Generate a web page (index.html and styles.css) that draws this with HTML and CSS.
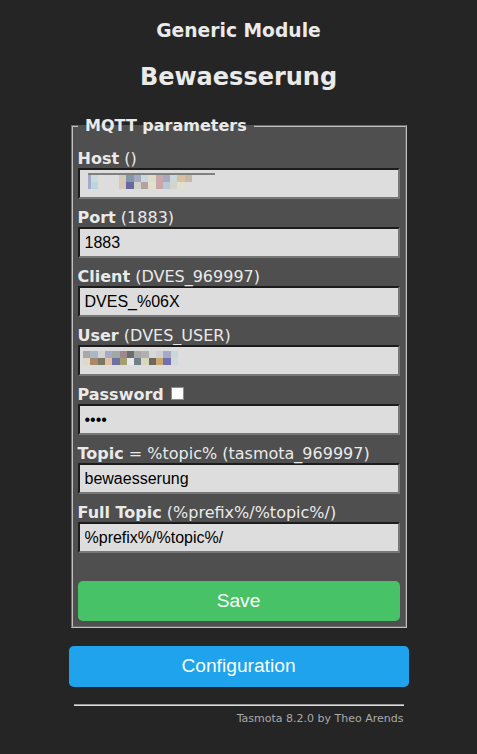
FILE: index.html
```html
<!DOCTYPE html>
<html lang="de">
<head>
    <meta charset="UTF-8">
    <meta name="viewport" content="width=device-width, initial-scale=1.0">
    <title>Bewaesserung - MQTT</title>
    <link rel="stylesheet" href="styles.css">
</head>
<body>
    <div class="page">
        <div class="head">
            <h3>Generic Module</h3>
            <h2>Bewaesserung</h2>
        </div>

        <fieldset class="box">
            <legend><b>&nbsp;MQTT parameters&nbsp;</b></legend>
            <form id="mqtt-form" method="get" action="mq">
                <p class="field">
                    <label for="mh"><b>Host</b> ()</label>
                    <span class="inbox">
                        <input type="text" id="mh" name="mh" value="">
                        <span class="mask mask-host">
                            <span class="bar"></span>
                            <span class="row r1"></span>
                            <span class="row r2"></span>
                        </span>
                    </span>
                </p>
                <p class="field">
                    <label for="ml"><b>Port</b> (1883)</label>
                    <input type="text" id="ml" name="ml" value="1883">
                </p>
                <p class="field">
                    <label for="mc"><b>Client</b> (DVES_969997)</label>
                    <input type="text" id="mc" name="mc" value="DVES_%06X">
                </p>
                <p class="field">
                    <label for="mu"><b>User</b> (DVES_USER)</label>
                    <span class="inbox">
                        <input type="text" id="mu" name="mu" value="">
                        <span class="mask mask-user">
                            <span class="row r1"></span>
                            <span class="row r2"></span>
                        </span>
                    </span>
                </p>
                <p class="field">
                    <label for="mp"><b>Password</b> <input type="checkbox" class="show" id="sp"></label>
                    <input type="password" id="mp" name="mp" value="****">
                </p>
                <p class="field">
                    <label for="mt"><b>Topic</b> = %topic% (tasmota_969997)</label>
                    <input type="text" id="mt" name="mt" value="bewaesserung">
                </p>
                <p class="field">
                    <label for="mf"><b>Full Topic</b> (%prefix%/%topic%/)</label>
                    <input type="text" id="mf" name="mf" value="%prefix%/%topic%/">
                </p>
                <button type="submit" class="btn save">Save</button>
            </form>
        </fieldset>

        <form class="cfg" action="cn" method="get">
            <button type="submit" class="btn">Configuration</button>
        </form>

        <div class="foot">
            <hr>
            <span>Tasmota 8.2.0 by Theo Arends</span>
        </div>
    </div>

    <script>
        document.getElementById('sp').addEventListener('click', function() {
            var p = document.getElementById('mp');
            p.type = p.type === 'password' ? 'text' : 'password';
        });
    </script>
</body>
</html>
```

FILE: styles.css
```css
body {
    margin: 8px;
    background: #252525;
    color: #eaeaea;
    font-family: "DejaVu Sans", Verdana, sans-serif;
    font-size: 16px;
    text-align: center;
}
.page {
    display: inline-block;
    width: 340px;
    padding: 5px;
    text-align: left;
}
.head {
    text-align: center;
}
.head h3 {
    margin: 7px 0 0;
    font-size: 18.72px;
    line-height: 22px;
}
.head h2 {
    margin: 21px 0 25px;
    font-size: 24px;
    line-height: 28px;
}
.box {
    margin: 0 2px;
    padding: 5px;
    border: 2px groove #c0c0c0;
    background: #4f4f4f;
}
.box legend {
    padding: 1px 2px 0;
    line-height: 18px;
}
.box form {
    margin: 0;
}
.field {
    margin: 8px 0;
}
.field label {
    display: block;
    line-height: 19px;
    padding-top: 1px;
}
input[type="text"], input[type="password"] {
    display: block;
    width: 100%;
    height: 31px;
    margin: 0;
    box-sizing: border-box;
    padding: 5px;
    border: 2px solid;
    border-color: #1c1c1c #777 #777 #1c1c1c;
    background: #dddddd;
    color: #000;
    font-family: "Liberation Sans", Arial, sans-serif;
    font-size: 16px;
}
.show {
    appearance: none;
    -webkit-appearance: none;
    display: inline-block;
    width: 13px;
    height: 13px;
    margin: 0 0 0 2px;
    box-sizing: border-box;
    border: 1px solid #8a8a8a;
    background: #fff;
    vertical-align: baseline;
}
.inbox {
    display: block;
    position: relative;
}
.mask {
    position: absolute;
    display: flex;
    flex-direction: column;
}
.mask .bar, .mask .row {
    display: block;
    height: 7px;
}
.mask-host {
    left: 10px;
    top: 5px;
    width: 127px;
}
.mask-host .bar {
    height: 2px;
    background: #808080;
}
.mask-host .r1 {
    background: linear-gradient(to right, #a8a8c8 0 3px, #c8dce0 3px 10px, transparent 10px 31px, #d8c8b8 31px 38px, #8098a8 38px 46px, #a8a8c0 46px 53px, #c8d8e0 53px 60px, #dcdcc8 60px 68px, #c8a8a8 68px 75px, #a8a8c0 75px 82px, #c8d8e0 82px 89px, #d8c0a0 89px 97px, #c8b8a8 97px 104px, transparent 104px);
}
.mask-host .r2 {
    background: linear-gradient(to right, #a8a8c8 0 3px, #b8d8e0 3px 10px, transparent 10px 31px, #d8c8b8 31px 38px, #6868a0 38px 46px, #d0d4c8 46px 53px, #b8a0a0 53px 60px, #e0e0d0 60px 68px, #c8a8a8 68px 75px, #b8c8d8 75px 82px, #d4d4c8 82px 89px, #e0e0d0 89px 97px, transparent 97px);
}
.mask-user {
    left: 5px;
    top: 6px;
    width: 95px;
}
.mask-user .r1 {
    background: linear-gradient(to right, #a8a8a8 0 7px, #a8b8c8 7px 15px, #d4d4d4 15px 22px, #a8a8c8 22px 29px, #a0a8a8 29px 37px, #a08890 37px 44px, #6c6c6c 44px 51px, #a8a8a8 51px 58px, #b0b0b0 58px 66px, #d8d8d8 66px 73px, #d0d0d0 73px 80px, #a8a8c8 80px 88px, #c8d8d8 88px 95px);
}
.mask-user .r2 {
    background: linear-gradient(to right, #e0d8c8 0 7px, #a88868 7px 15px, #787868 15px 22px, #e0c0a0 22px 29px, #7070a0 29px 37px, #a0a070 37px 44px, #e8e8e8 44px 51px, #708088 51px 58px, #d8d8c0 58px 66px, #706860 66px 73px, #c8a870 73px 80px, #7070b0 80px 88px, #d4d8dc 88px 95px);
}
.btn {
    display: block;
    width: 100%;
    padding: 1px 6px;
    border: 0;
    border-radius: 0.3rem;
    background: #1fa3ec;
    color: #faffff;
    font-family: "Liberation Sans", Arial, sans-serif;
    font-size: 1.2rem;
    line-height: 2.4rem;
    cursor: pointer;
}
.btn:hover {
    background: #0e70a4;
}
.save {
    margin-top: 28px;
    background: #47c266;
}
.save:hover {
    background: #5aaf6f;
}
.cfg {
    margin: 18px 0 0;
}
.foot {
    padding: 0 5px;
    text-align: right;
    font-size: 11px;
    line-height: 13px;
    color: #aaa;
}
.foot hr {
    height: 0;
    margin: 17px 0 6px;
    border: 0;
    border-top: 1px solid #9a9a9a;
    border-bottom: 1px solid #dcdcdc;
}
```
